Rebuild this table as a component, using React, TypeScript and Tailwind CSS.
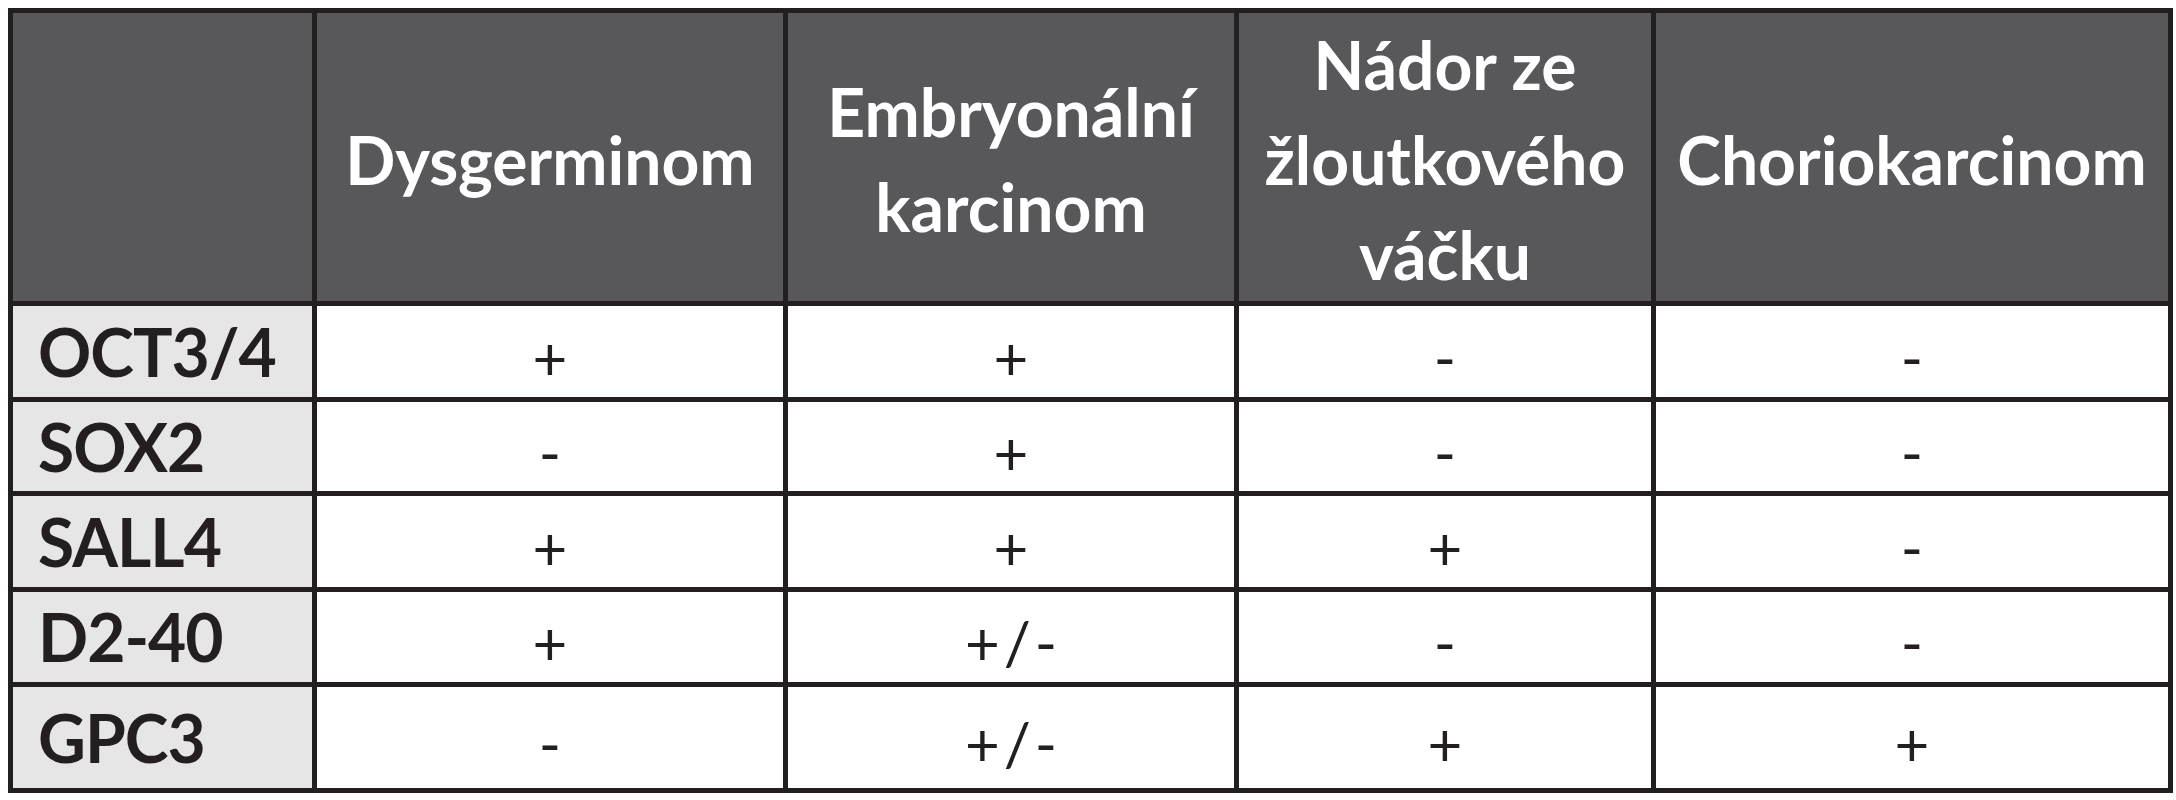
import { Fragment } from 'react';

const headers: string[][] = [
  ['Dysgerminom'],
  ['Embryonální', 'karcinom'],
  ['Nádor ze', 'žloutkového', 'váčku'],
  ['Choriokarcinom'],
];

const rows: { label: string; values: string[] }[] = [
  { label: 'OCT3/4', values: ['+', '+', '-', '-'] },
  { label: 'SOX2', values: ['-', '+', '-', '-'] },
  { label: 'SALL4', values: ['+', '+', '+', '-'] },
  { label: 'D2-40', values: ['+', '+/-', '-', '-'] },
  { label: 'GPC3', values: ['-', '+/-', '+', '+'] },
];

export default function App() {
  return (
    <div className="min-h-[800px] bg-white pt-[8px] pl-[8px] font-['Lato',sans-serif]">
      <div className="grid w-[2165px] grid-cols-[299px_466px_446px_412px_512px] grid-rows-[288px_91px_89px_91px_90px_101px] gap-[5px] bg-[#231f20] p-[5px]">
        {/* header row */}
        <div className="bg-[#58585a]" />
        {headers.map((lines, i) => (
          <div
            key={i}
            className="flex flex-col items-center justify-center bg-[#58585a] pt-[4px] text-center text-[66px] font-bold leading-[95px] text-white"
          >
            {lines.map((l) => (
              <span key={l}>{l}</span>
            ))}
          </div>
        ))}

        {/* body */}
        {rows.map((row) => (
          <Fragment key={row.label}>
            <div className="flex items-center bg-[#e6e6e6] pl-[25px] text-[66px] font-bold leading-none tracking-[-1px] text-[#231f20]">
              {row.label}
            </div>
            {row.values.map((v, j) => (
              <div
                key={j}
                className={
                  v === '+/-'
                    ? 'flex items-center justify-center bg-white pt-[10px] pl-[4px] text-[60px] leading-none tracking-[4px] text-[#231f20]'
                    : 'flex items-center justify-center bg-white pt-[10px] text-[60px] leading-none text-[#231f20]'
                }
              >
                {v}
              </div>
            ))}
          </Fragment>
        ))}
      </div>
    </div>
  );
}
